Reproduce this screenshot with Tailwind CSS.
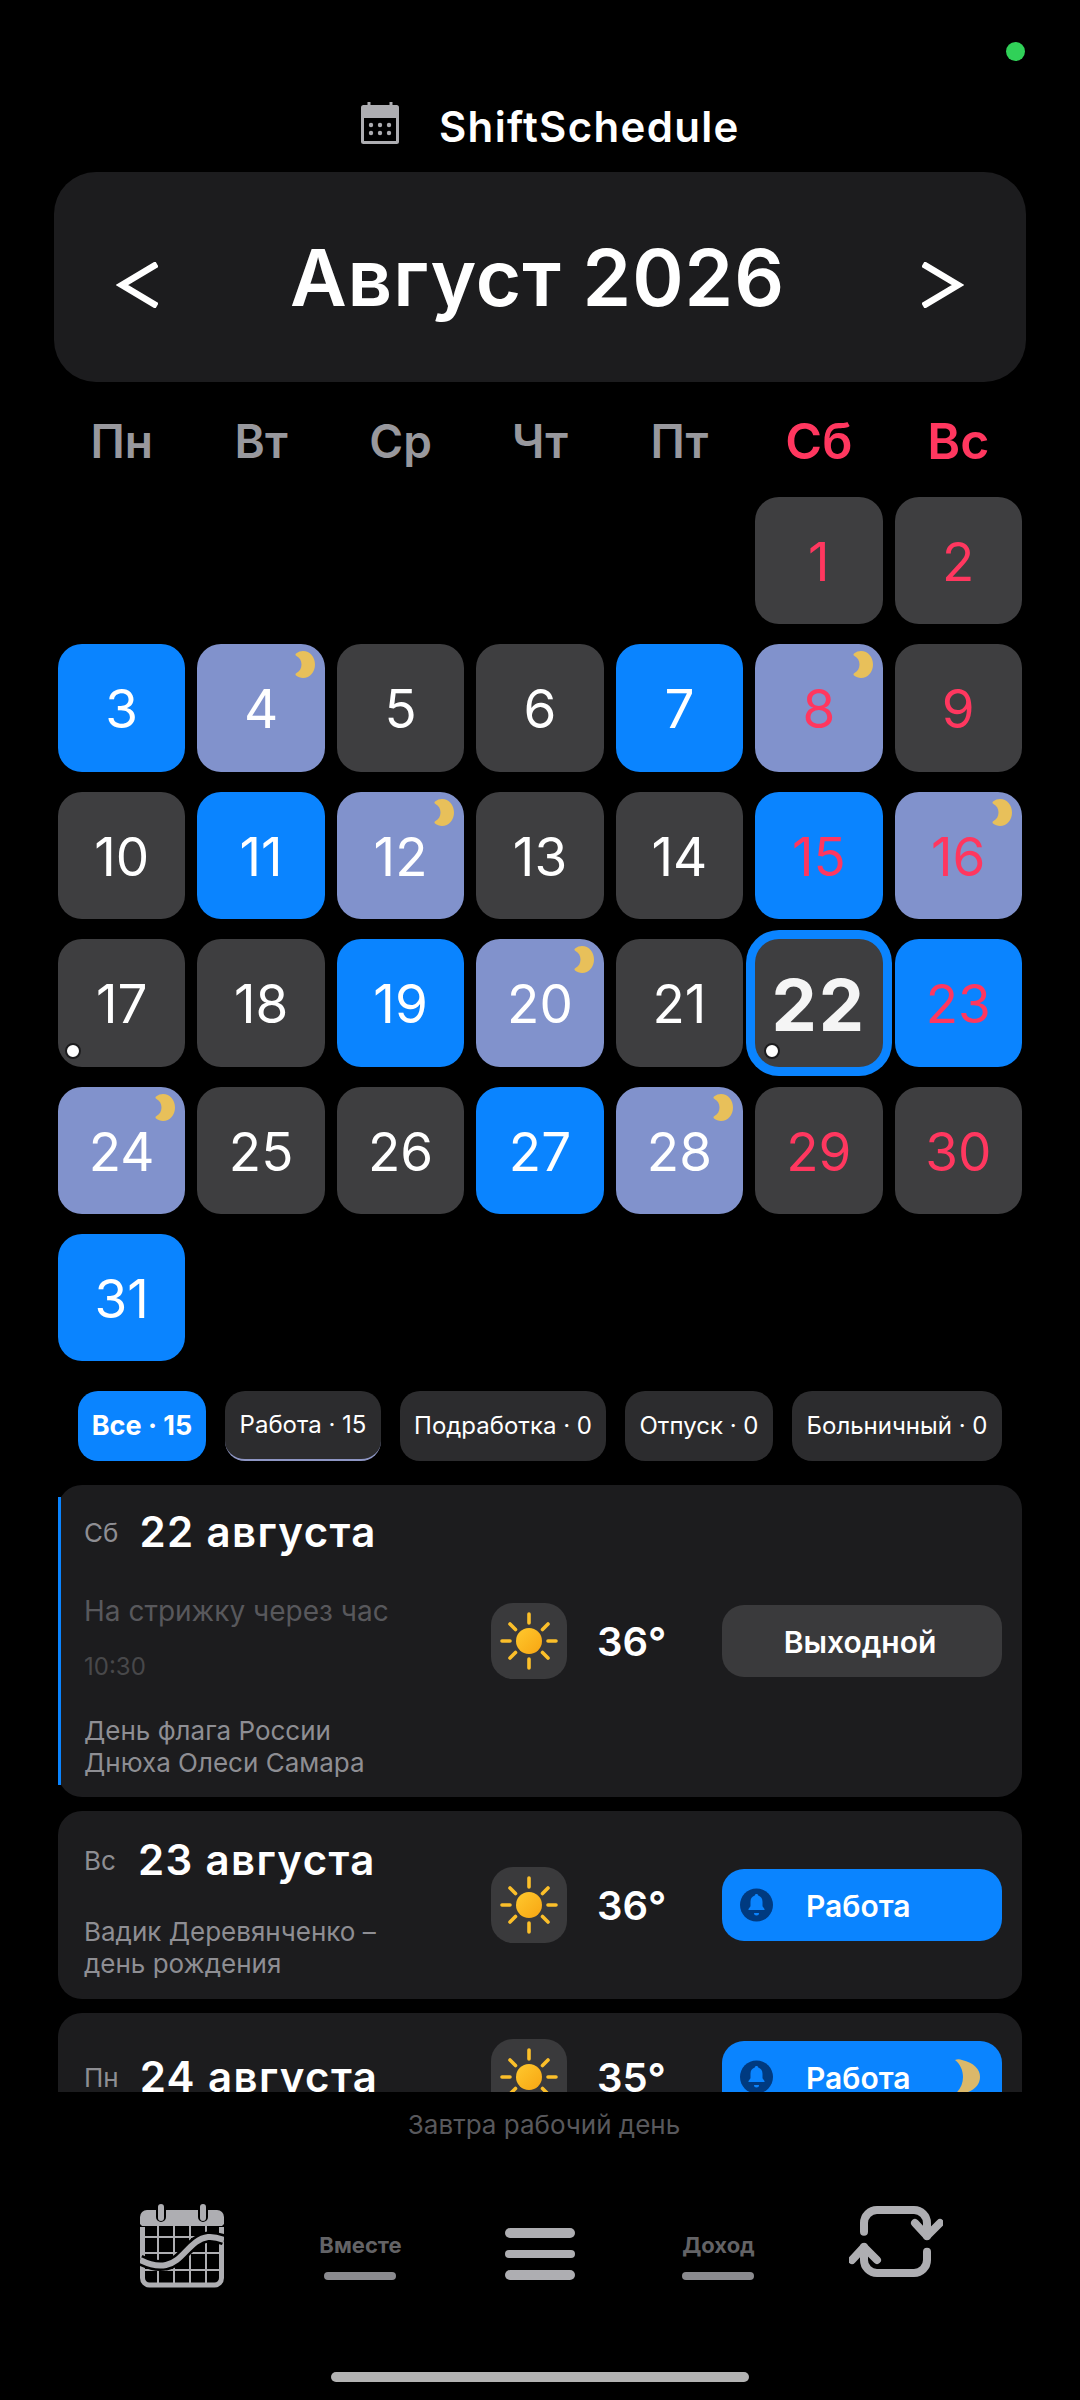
<!DOCTYPE html>
<html lang="ru">
<head>
  <meta charset="UTF-8" />
  <meta name="viewport" content="width=device-width, initial-scale=1.0" />
  <title>ShiftSchedule</title>
  <script src="https://cdn.jsdelivr.net/npm/@tailwindcss/browser@4"></script>
</head>
<body class="bg-black text-white font-['Inter','Noto_Sans',sans-serif]">
  <svg class="absolute w-0 h-0">
    <defs><linearGradient id="sunFill" x1="0" y1="0" x2="1" y2="1"><stop offset="0" stop-color="#ffc92e"/><stop offset="1" stop-color="#f7a512"/></linearGradient></defs>
    <symbol id="moon" viewBox="0 0 20 27"><path d="M1 2.500C3 .8 6 0 8 0c7 0 12 6 12 13.500S15 27 8 27c-2.500 0-5-1-7-2.500-1-1-.5-2 .5-2.500 3-1.500 5-4.500 5-8.500S4.500 6.500 1.500 5C.5 4.500 0 3.500 1 2.500Z" fill="currentColor"/></symbol>
    <symbol id="sun" viewBox="0 0 76 76">
      <circle cx="38" cy="38" r="13" fill="url(#sunFill)"/>
      <g stroke="#fbbf2a" stroke-width="3.600" stroke-linecap="round">
        <path d="M38 11v9M38 56v9M11 38h8M57 38h8M19 21l5.500 5.500M57 21l-5.500 5.500M19 55l5.500-5.500M57 55l-5.500-5.500"/>
      </g>
    </symbol>
    <symbol id="bell" viewBox="0 0 33 34">
      <circle cx="16.500" cy="17" r="16.500" fill="#003a80"/>
      <path d="M16.500 6c-1 0-1.700.7-1.700 1.600-2.800.8-4.300 3.200-4.300 6.200v4.500l-2 2.700v1h16v-1l-2-2.700v-4.500c0-3-1.500-5.400-4.300-6.200 0-.9-.7-1.600-1.700-1.600Z" fill="#0a84ff"/>
      <path d="M14 25h5a2.500 2.500 0 0 1-5 0Z" fill="#0a84ff"/>
    </symbol>
  </svg>

  <div class="relative w-[1080px] h-[2400px] overflow-hidden flex flex-col">
    <div class="absolute left-[1006px] top-[42px] w-[19px] h-[19px] rounded-full bg-[#30d158]"></div>

    <!-- Header -->
    <div class="mt-[102px] h-[42px] flex items-center pl-[361px]">
      <svg width="38" height="42" viewBox="0 0 38 42">
        <path d="M8 0v4M30 0v4" stroke="#aeaeb2" stroke-width="3"/>
        <rect y="3" width="38" height="39" rx="2.500" fill="#aeaeb2"/>
        <rect x="3" y="16" width="32" height="23" fill="#000"/>
        <g fill="#aeaeb2"><circle cx="10" cy="23" r="2.200"/><circle cx="19" cy="23" r="2.200"/><circle cx="28" cy="23" r="2.200"/><circle cx="10" cy="31" r="2.200"/><circle cx="19" cy="31" r="2.200"/><circle cx="28" cy="31" r="2.200"/></g>
      </svg>
      <span class="ml-[40px] mt-[7px] text-[42px] leading-[42px] font-semibold tracking-[1.300px]">ShiftSchedule</span>
    </div>

    <div class="mt-[28px] mx-[54px] h-[210px] rounded-[42px] bg-[#1c1c1e] flex items-center justify-between px-[62px]">
      <svg class="mt-[15px]" width="42" height="46" viewBox="0 0 42 46"><path d="M41 2 6 23l35 21" fill="none" stroke="#fff" stroke-width="6.500"/></svg>
      <span class="mt-[2px] mr-[5px] text-[78px] leading-none font-semibold tracking-[1px]">Август 2026</span>
      <svg class="mt-[15px]" width="42" height="46" viewBox="0 0 42 46"><path d="m1 2 35 21L1 44" fill="none" stroke="#fff" stroke-width="6.500"/></svg>
    </div>

    <!-- Calendar -->
    <div class="mt-[30px] px-[58px] grid grid-cols-7 gap-x-[12px] text-center text-[46px] leading-[58px] font-semibold text-[#98989d]">
      <span>Пн</span><span>Вт</span><span>Ср</span><span>Чт</span><span>Пт</span><span class="text-[50px] text-[#ff375f]">Сб</span><span class="text-[50px] text-[#ff375f]">Вс</span>
    </div>

    <div class="mt-[27px] px-[58px] grid grid-cols-7 gap-x-[12px] gap-y-[20px] auto-rows-[127.4px] text-[53px] font-normal [&>div]:pt-[4px]">
      <div class="col-start-6 rounded-3xl bg-[#3e3e40] text-[#ff375f] flex items-center justify-center">1</div>
      <div class="rounded-3xl bg-[#3e3e40] text-[#ff375f] flex items-center justify-center">2</div>

      <div class="rounded-3xl bg-[#0a84ff] flex items-center justify-center">3</div>
      <div class="relative rounded-3xl bg-[#8192cc] flex items-center justify-center">4<svg class="absolute top-[7px] right-[10px] w-[20px] h-[27px] text-[#e8c05a]"><use href="#moon"/></svg></div>
      <div class="rounded-3xl bg-[#3e3e40] flex items-center justify-center">5</div>
      <div class="rounded-3xl bg-[#3e3e40] flex items-center justify-center">6</div>
      <div class="rounded-3xl bg-[#0a84ff] flex items-center justify-center">7</div>
      <div class="relative rounded-3xl bg-[#8192cc] text-[#ff375f] flex items-center justify-center">8<svg class="absolute top-[7px] right-[10px] w-[20px] h-[27px] text-[#e8c05a]"><use href="#moon"/></svg></div>
      <div class="rounded-3xl bg-[#3e3e40] text-[#ff375f] flex items-center justify-center">9</div>

      <div class="rounded-3xl bg-[#3e3e40] flex items-center justify-center">10</div>
      <div class="rounded-3xl bg-[#0a84ff] flex items-center justify-center">11</div>
      <div class="relative rounded-3xl bg-[#8192cc] flex items-center justify-center">12<svg class="absolute top-[7px] right-[10px] w-[20px] h-[27px] text-[#e8c05a]"><use href="#moon"/></svg></div>
      <div class="rounded-3xl bg-[#3e3e40] flex items-center justify-center">13</div>
      <div class="rounded-3xl bg-[#3e3e40] flex items-center justify-center">14</div>
      <div class="rounded-3xl bg-[#0a84ff] text-[#ff375f] flex items-center justify-center">15</div>
      <div class="relative rounded-3xl bg-[#8192cc] text-[#ff375f] flex items-center justify-center">16<svg class="absolute top-[7px] right-[10px] w-[20px] h-[27px] text-[#e8c05a]"><use href="#moon"/></svg></div>

      <div class="relative rounded-3xl bg-[#3e3e40] flex items-center justify-center">17<span class="absolute left-[7px] bottom-[8px] w-[16px] h-[16px] rounded-full bg-white border-2 border-[#1c1c1e]"></span></div>
      <div class="rounded-3xl bg-[#3e3e40] flex items-center justify-center">18</div>
      <div class="rounded-3xl bg-[#0a84ff] flex items-center justify-center">19</div>
      <div class="relative rounded-3xl bg-[#8192cc] flex items-center justify-center">20<svg class="absolute top-[7px] right-[10px] w-[20px] h-[27px] text-[#e8c05a]"><use href="#moon"/></svg></div>
      <div class="rounded-3xl bg-[#3e3e40] flex items-center justify-center">21</div>
      <div class="relative rounded-3xl bg-[#3e3e40] ring-[9px] ring-[#0a84ff] flex items-center justify-center text-[72px] font-bold tracking-[2px] text-[#f5f5f5]">22<span class="absolute left-[9px] bottom-[8px] w-[16px] h-[16px] rounded-full bg-white border-2 border-[#1c1c1e]"></span></div>
      <div class="rounded-3xl bg-[#0a84ff] text-[#ff375f] flex items-center justify-center">23</div>

      <div class="relative rounded-3xl bg-[#8192cc] flex items-center justify-center">24<svg class="absolute top-[7px] right-[10px] w-[20px] h-[27px] text-[#e8c05a]"><use href="#moon"/></svg></div>
      <div class="rounded-3xl bg-[#3e3e40] flex items-center justify-center">25</div>
      <div class="rounded-3xl bg-[#3e3e40] flex items-center justify-center">26</div>
      <div class="rounded-3xl bg-[#0a84ff] flex items-center justify-center">27</div>
      <div class="relative rounded-3xl bg-[#8192cc] flex items-center justify-center">28<svg class="absolute top-[7px] right-[10px] w-[20px] h-[27px] text-[#e8c05a]"><use href="#moon"/></svg></div>
      <div class="rounded-3xl bg-[#3e3e40] text-[#ff375f] flex items-center justify-center">29</div>
      <div class="rounded-3xl bg-[#3e3e40] text-[#ff375f] flex items-center justify-center">30</div>

      <div class="rounded-3xl bg-[#0a84ff] flex items-center justify-center">31</div>
    </div>

    <!-- Filter chips -->
    <div class="mt-[30px] pl-[78px] flex gap-[19px] h-[70px] text-[24px]">
      <div class="w-[128px] rounded-[20px] bg-[#0a84ff] text-[27px] font-bold flex items-center justify-center">Все · 15</div>
      <div class="w-[156px] rounded-[20px] bg-[#2c2c2e] border-b-2 border-[#8e96c4] flex items-center justify-center">Работа · 15</div>
      <div class="w-[206px] rounded-[20px] bg-[#2c2c2e] flex items-center justify-center">Подработка · 0</div>
      <div class="w-[148px] rounded-[20px] bg-[#2c2c2e] flex items-center justify-center">Отпуск · 0</div>
      <div class="w-[210px] rounded-[20px] bg-[#2c2c2e] flex items-center justify-center">Больничный · 0</div>
    </div>

    <!-- Day list -->
    <div class="mt-[24px] mx-[58px] h-[607px] overflow-hidden flex flex-col gap-[14px]">
      <div class="relative shrink-0 h-[312px] rounded-3xl bg-[#1c1c1e] flex items-center pr-[20px]">
        <span class="absolute left-0 top-[12px] bottom-[12px] w-[3px] bg-[#0a84ff]"></span>
        <div class="w-[433px] pl-[26px] flex flex-col self-start">
          <div class="mt-[23px] flex items-center gap-[21px] h-[48px]">
            <span class="text-[26px] text-[#8e8e93]">Сб</span>
            <span class="text-[42px] leading-none font-semibold tracking-[1.400px]">22 августа</span>
          </div>
          <span class="mt-[37px] text-[28px] leading-[36px] text-[#58585c]">На стрижку через час</span>
          <span class="mt-[20px] text-[24px] leading-[36px] text-[#48484a]">10:30</span>
          <div class="mt-[30px] text-[26px] leading-[32px] text-[#8e8e93]">День флага России<br>Днюха Олеси Самара</div>
        </div>
        <div class="w-[76px] h-[76px] rounded-[22px] bg-[#3a3a3c]"><svg class="w-[76px] h-[76px]"><use href="#sun"/></svg></div>
        <span class="w-[155px] pl-[30px] pt-[2px] text-[40px] font-semibold">36°</span>
        <div class="w-[280px] h-[72px] pt-[3px] pr-[4px] rounded-[22px] bg-[#3a3a3c] flex items-center justify-center text-[30px] font-semibold">Выходной</div>
      </div>

      <div class="shrink-0 h-[188px] rounded-3xl bg-[#1c1c1e] flex items-center pr-[20px]">
        <div class="w-[433px] pl-[26px] flex flex-col self-start">
          <div class="mt-[25px] flex items-center gap-[22px] h-[48px]">
            <span class="text-[26px] text-[#8e8e93]">Вс</span>
            <span class="text-[42px] leading-none font-semibold tracking-[1.400px]">23 августа</span>
          </div>
          <div class="mt-[32px] text-[26px] leading-[32px] text-[#8e8e93]">Вадик Деревянченко –<br>день рождения</div>
        </div>
        <div class="w-[76px] h-[76px] rounded-[22px] bg-[#3a3a3c]"><svg class="w-[76px] h-[76px]"><use href="#sun"/></svg></div>
        <span class="w-[155px] pl-[30px] pt-[2px] text-[40px] font-semibold">36°</span>
        <div class="w-[280px] h-[72px] rounded-[22px] bg-[#0a84ff] flex items-center pl-[18px] text-[30px] font-semibold">
          <svg class="w-[33px] h-[34px]"><use href="#bell"/></svg><span class="ml-[33px] pt-[2px]">Работа</span>
        </div>
      </div>

      <div class="shrink-0 h-[128px] rounded-3xl bg-[#1c1c1e] flex items-center pr-[20px]">
        <div class="w-[433px] pl-[26px] flex items-center gap-[21px]">
          <span class="text-[26px] text-[#8e8e93]">Пн</span>
          <span class="text-[42px] leading-none font-semibold tracking-[1.400px]">24 августа</span>
        </div>
        <div class="w-[76px] h-[76px] rounded-[22px] bg-[#3a3a3c]"><svg class="w-[76px] h-[76px]"><use href="#sun"/></svg></div>
        <span class="w-[155px] pl-[30px] pt-[2px] text-[40px] font-semibold">35°</span>
        <div class="relative w-[280px] h-[72px] rounded-[22px] bg-[#0a84ff] flex items-center pl-[18px] text-[30px] font-semibold">
          <svg class="w-[33px] h-[34px]"><use href="#bell"/></svg><span class="ml-[33px] pt-[2px]">Работа</span>
          <svg class="absolute right-[21px] top-[18px] w-[27px] h-[36px] text-[#dbb86a]" viewBox="0 0 27 36"><path d="M1 1c2-1 5-1 7 0 12 3 18 9 18 17S20 32 8 35c-2 1-5 1-7 0 5-4 8-10 8-17S6 5 1 1Z" fill="currentColor"/></svg>
        </div>
      </div>
    </div>

    <p class="mt-[17px] ml-[8px] text-center text-[26px] leading-[32px] text-[#58585c]">Завтра рабочий день</p>

    <!-- Bottom nav -->
    <nav class="mt-[62px] ml-[92px] w-[895px] h-[90px] grid grid-cols-5 items-center justify-items-center text-[#aeaeb2]">
      <svg class="mb-[5px]" width="84" height="84" viewBox="0 0 84 84" fill="none">
        <path d="M2.500 23V74a7 7 0 0 0 7 7h65a7 7 0 0 0 7-7V23" stroke="currentColor" stroke-width="5"/>
        <path d="M0 20V13a7 7 0 0 1 7-7h70a7 7 0 0 1 7 7v7l-2 2H2Z" fill="currentColor"/>
        <path d="M18 20v61M34 20v61M50 20v61M66 20v61M3 33h78M3 49h78M3 66h78" stroke="currentColor" stroke-width="2"/>
        <path d="M21 1v12M63 1v12" stroke="#000" stroke-width="10" stroke-linecap="round"/>
        <path d="M21 3v11M63 3v11" stroke="currentColor" stroke-width="6" stroke-linecap="round"/>
        <path d="M0 56c8 4 17 7 26 5 17-3 24-26 42-28 6-.5 11 1 16 3" stroke="#000" stroke-width="11"/>
        <path d="M0 56c8 4 17 7 26 5 17-3 24-26 42-28 6-.5 11 1 16 3" stroke="currentColor" stroke-width="6"/>
      </svg>

      <div class="flex flex-col items-center pt-[15px]">
        <span class="text-[22px] leading-[28px] font-bold text-[#636366]">Вместе</span>
        <span class="mt-[13px] w-[72px] h-[8px] rounded-full bg-[#8a8a8e]"></span>
      </div>

      <div class="mt-[11px] flex flex-col gap-[12px]">
        <span class="w-[70px] h-[10px] rounded-full bg-[#aeaeb2]"></span>
        <span class="w-[70px] h-[8px] rounded-full bg-[#aeaeb2]"></span>
        <span class="w-[70px] h-[10px] rounded-full bg-[#aeaeb2]"></span>
      </div>

      <div class="flex flex-col items-center pt-[15px]">
        <span class="text-[22px] leading-[28px] font-bold text-[#636366]">Доход</span>
        <span class="mt-[13px] w-[72px] h-[8px] rounded-full bg-[#8a8a8e]"></span>
      </div>

      <svg class="mb-[13px] mr-[4px]" width="94" height="72" viewBox="0 0 94 72" fill="none" stroke="currentColor" stroke-width="8" stroke-linecap="round" stroke-linejoin="round">
        <path d="M15 25.700V17a13 13 0 0 1 13-13h37a13 13 0 0 1 13 13v13"/>
        <path d="m66 17 12 13 13-13"/>
        <path d="M78 45.700V54a13 13 0 0 1-13 13H28a13 13 0 0 1-13-13V41"/>
        <path d="m3 54 12-13 13 13"/>
      </svg>
    </nav>

    <div class="absolute left-[331px] top-[2372px] w-[418px] h-[10px] rounded-full bg-[#b3b3b3]"></div>
  </div>
</body>
</html>
